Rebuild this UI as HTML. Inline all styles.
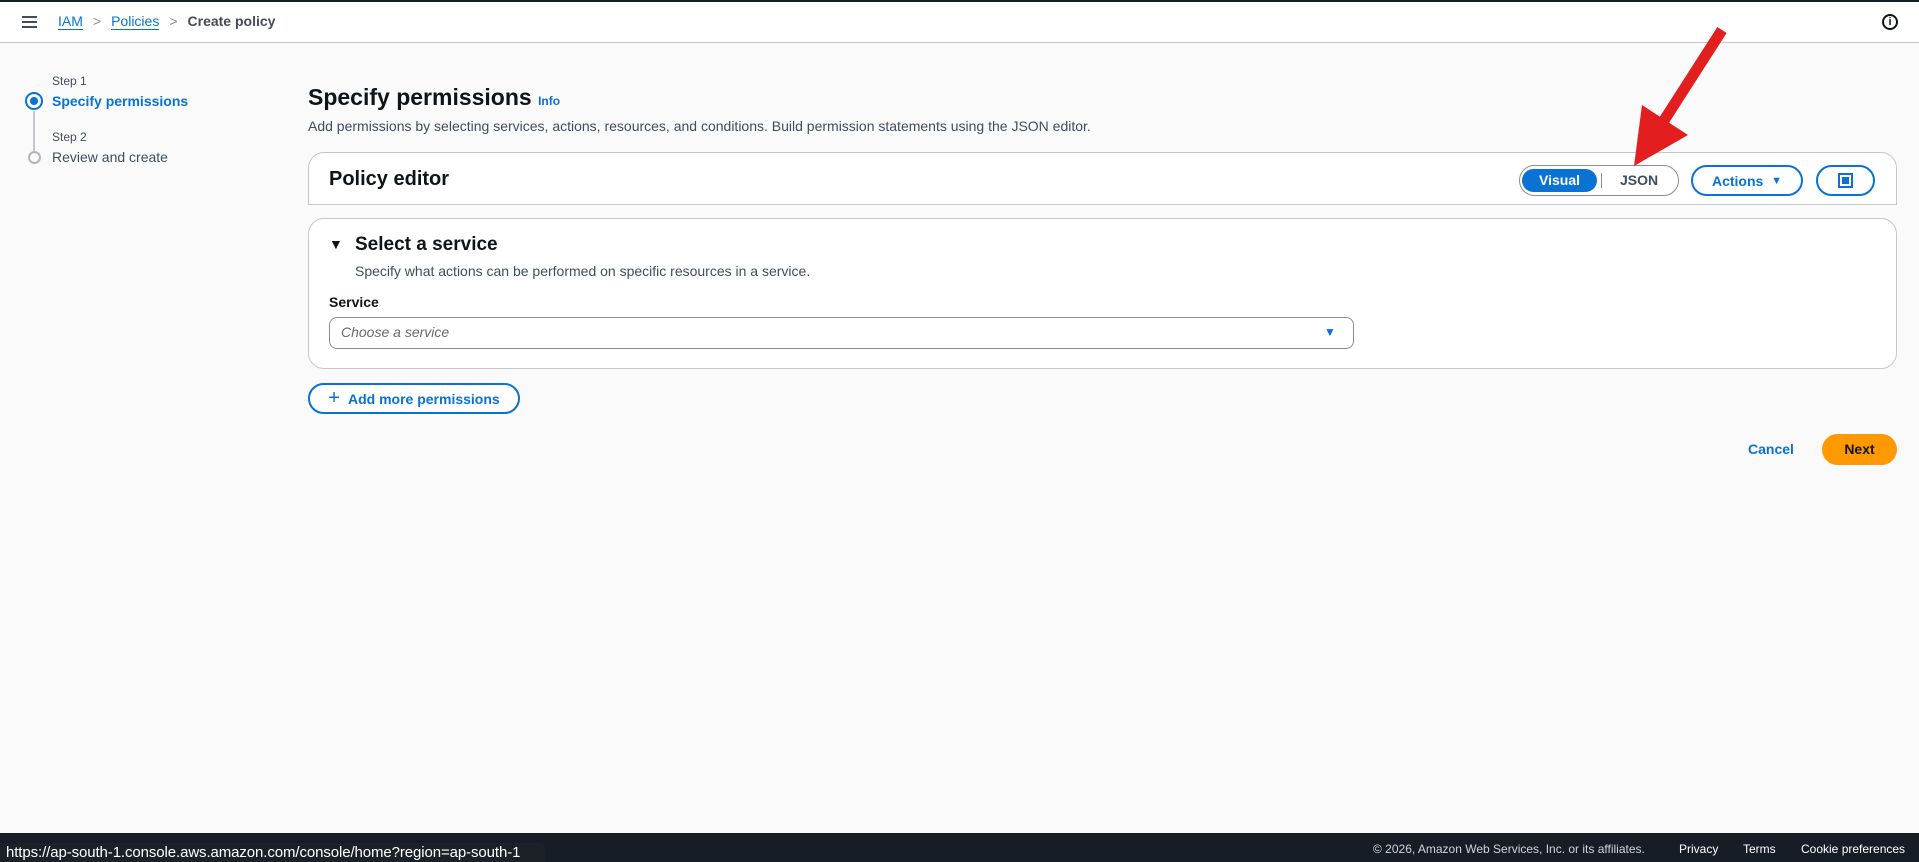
<!DOCTYPE html>
<html><head><meta charset="utf-8"><style>
*{box-sizing:border-box;margin:0;padding:0}
body{width:1919px;height:862px;overflow:hidden;background:#fafafa;font-family:"Liberation Sans",sans-serif;color:#0f141a;position:relative}
.a{position:absolute}
.hdr{left:0;top:0;width:1919px;height:43px;background:#fff;border-top:2px solid #161d26;border-bottom:1px solid #c6c6cd}
.blue{color:#0972d3}
.box{background:#fff;border:1px solid #c6c6cd}
.btn{border:2px solid #0972d3;border-radius:20px;color:#0972d3;font-weight:bold;font-size:14px;display:flex;align-items:center;justify-content:center;background:#fff}
</style></head><body>
<div class="a hdr"></div>
<div class="a" style="left:22px;top:16px;width:15px;height:2px;background:#414d5c;box-shadow:0 5px 0 #414d5c,0 10px 0 #414d5c"></div>
<div class="a" style="left:58px;top:13px;font-size:14px;"><span class="blue" style="border-bottom:1px solid #0972d3">IAM</span><span style="color:#8c8c94;margin:0 10px">&gt;</span><span class="blue" style="border-bottom:1px solid #0972d3">Policies</span><span style="color:#8c8c94;margin:0 10px">&gt;</span><span style="color:#414d5c;font-weight:bold">Create policy</span></div>
<div class="a" style="left:1882px;top:14px;width:16px;height:16px;border:2px solid #0f141a;border-radius:50%;font-size:11px;font-weight:bold;text-align:center;line-height:12px">i</div>

<div class="a" style="left:52px;top:74px;font-size:12px;color:#414d5c">Step 1</div>
<div class="a" style="left:25px;top:92px;width:18px;height:18px;border:2px solid #0972d3;border-radius:50%"><div style="margin:3px;width:8px;height:8px;border-radius:50%;background:#0972d3"></div></div>
<div class="a blue" style="left:52px;top:93px;font-size:14px;font-weight:bold">Specify permissions</div>
<div class="a" style="left:33px;top:111px;width:2px;height:40px;background:#c6c6cd"></div>
<div class="a" style="left:52px;top:130px;font-size:12px;color:#414d5c">Step 2</div>
<div class="a" style="left:28px;top:151px;width:13px;height:13px;border:2px solid #b4b4bb;border-radius:50%"></div>
<div class="a" style="left:52px;top:149px;font-size:14px;color:#414d5c">Review and create</div>

<div class="a" style="left:308px;top:84px;font-size:23px;font-weight:bold">Specify permissions <span class="blue" style="font-size:12px">Info</span></div>
<div class="a" style="left:308px;top:118px;font-size:14px;color:#414d5c">Add permissions by selecting services, actions, resources, and conditions. Build permission statements using the JSON editor.</div>

<div class="a box" style="left:308px;top:152px;width:1589px;height:53px;border-radius:16px 16px 0 0;border-bottom-color:#c6c6cd"></div>
<div class="a" style="left:329px;top:168px;font-size:20px;font-weight:bold">Policy editor</div>
<div class="a" style="left:1519px;top:165px;width:160px;height:31px;border:1px solid #8c8c94;border-radius:16px;background:#fff"></div>
<div class="a" style="left:1522px;top:169px;width:75px;height:23px;border-radius:12px;background:#0972d3;color:#fff;font-weight:bold;font-size:14px;text-align:center;line-height:23px">Visual</div>
<div class="a" style="left:1601px;top:173px;width:1px;height:15px;background:#8c8c94"></div>
<div class="a" style="left:1620px;top:172px;font-weight:bold;font-size:14px;color:#414d5c">JSON</div>
<div class="a btn" style="left:1691px;top:165px;width:112px;height:31px">Actions&nbsp;&nbsp;<span style="font-size:11px">▼</span></div>
<div class="a btn" style="left:1816px;top:165px;width:59px;height:31px"><div style="width:15px;height:15px;border:2px solid #0972d3;padding:2px"><div style="width:7px;height:7px;background:#0972d3"></div></div></div>

<div class="a box" style="left:308px;top:218px;width:1589px;height:151px;border-radius:16px"></div>
<div class="a" style="left:329px;top:236px;font-size:14px">▼</div>
<div class="a" style="left:355px;top:234px;font-size:19px;font-weight:bold">Select a service</div>
<div class="a" style="left:355px;top:263px;font-size:14px;color:#414d5c">Specify what actions can be performed on specific resources in a service.</div>
<div class="a" style="left:329px;top:294px;font-size:14px;font-weight:bold">Service</div>
<div class="a" style="left:329px;top:317px;width:1025px;height:32px;border:1px solid #8c8c94;border-radius:8px;background:#fff"></div>
<div class="a" style="left:341px;top:324px;font-size:14px;font-style:italic;color:#656871">Choose a service</div>
<div class="a" style="left:1324px;top:325px;font-size:12px;color:#0972d3">▼</div>

<div class="a btn" style="left:308px;top:383px;width:212px;height:31px"><span style="font-size:20px;font-weight:normal;margin-right:8px">+</span>Add more permissions</div>

<div class="a blue" style="left:1748px;top:441px;font-size:14px;font-weight:bold">Cancel</div>
<div class="a" style="left:1822px;top:434px;width:75px;height:31px;border-radius:16px;background:#ff9900;font-size:14px;font-weight:bold;text-align:center;line-height:31px">Next</div>

<svg class="a" style="left:0;top:0" width="1919" height="862">
<line x1="1722" y1="30" x2="1663" y2="122" stroke="#e31e1e" stroke-width="11"/>
<polygon points="1634,166 1642,105 1688,135" fill="#e31e1e"/>
</svg>

<div class="a" style="left:0;top:833px;width:1919px;height:29px;background:#161d26"></div>
<div class="a" style="left:1373px;top:842px;font-size:12px;color:#d1d5db">© 2026, Amazon Web Services, Inc. or its affiliates.</div>
<div class="a" style="left:1679px;top:842px;font-size:12px;color:#fff">Privacy</div>
<div class="a" style="left:1743px;top:842px;font-size:12px;color:#fff">Terms</div>
<div class="a" style="left:1801px;top:842px;font-size:12px;color:#fff">Cookie preferences</div>
<div class="a" style="left:0;top:843px;width:545px;height:19px;background:#1c2128;border-radius:0 5px 0 0"></div>
<div class="a" style="left:6px;top:844px;font-size:15px;color:#fff;letter-spacing:-0.1px">https://ap-south-1.console.aws.amazon.com/console/home?region=ap-south-1</div>
</body></html>
